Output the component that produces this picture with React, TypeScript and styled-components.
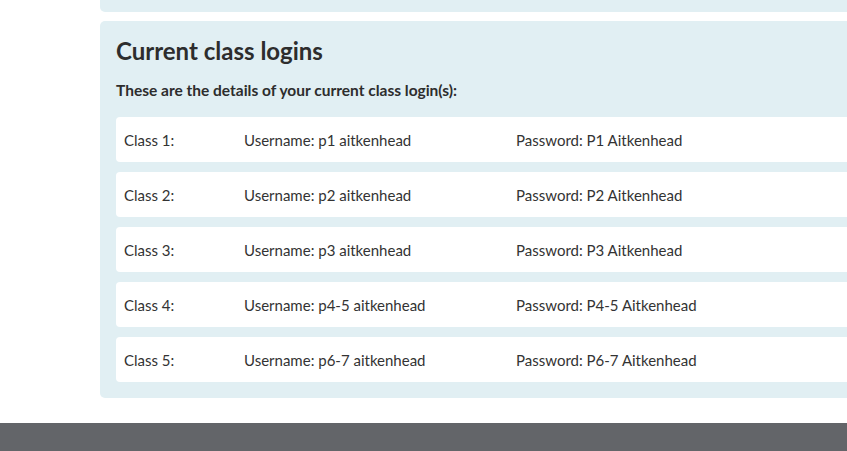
import React from "react";
import styled, { createGlobalStyle } from "styled-components";

const Global = createGlobalStyle`
  html, body { margin: 0; padding: 0; background: #ffffff; overflow: hidden; }
  body { font-family: Lato, "Liberation Sans", sans-serif; color: #333333; width: 847px; height: 451px; }
`;

const Page = styled.div`
  display: flex;
  flex-direction: column;
  height: 451px;
`;

const Main = styled.main`
  flex: 1;
  display: flex;
  flex-direction: column;
  gap: 9px;
  padding-left: 100px;
`;

const TopCard = styled.div`
  height: 12px;
  background: #e1eff3;
  border-radius: 0 0 0 5px;
`;

const Card = styled.section`
  background: #e1eff3;
  border-radius: 5px 0 0 5px;
  padding: 16px 0 16px 16px;
`;

const Title = styled.h2`
  margin: 0;
  font-size: 24px;
  line-height: 28px;
  font-weight: 700;
  color: #2d2d2d;
`;

const Intro = styled.p`
  margin: 15px 0 17px;
  font-size: 15.5px;
  line-height: 20px;
  font-weight: 700;
  color: #2d2d2d;
`;

const List = styled.div`
  display: flex;
  flex-direction: column;
  gap: 10px;
`;

const Row = styled.div`
  display: grid;
  grid-template-columns: 120px 272px 1fr;
  align-items: center;
  height: 45px;
  padding-left: 8px;
  background: #ffffff;
  border-radius: 4px 0 0 4px;
  font-size: 15px;
  color: #333333;
`;

const Cell = styled.span`
  white-space: nowrap;
`;

const Footer = styled.footer`
  height: 28px;
  background: #636569;
`;

const logins = [
  { c: "Class 1:", u: "p1 aitkenhead", p: "P1 Aitkenhead" },
  { c: "Class 2:", u: "p2 aitkenhead", p: "P2 Aitkenhead" },
  { c: "Class 3:", u: "p3 aitkenhead", p: "P3 Aitkenhead" },
  { c: "Class 4:", u: "p4-5 aitkenhead", p: "P4-5 Aitkenhead" },
  { c: "Class 5:", u: "p6-7 aitkenhead", p: "P6-7 Aitkenhead" },
];

export default function App() {
  return (
    <Page>
      <Global />
      <Main>
        <TopCard />
        <Card>
          <Title>Current class logins</Title>
          <Intro>These are the details of your current class login(s):</Intro>
          <List>
            {logins.map((l) => (
              <Row key={l.c}>
                <Cell>{l.c}</Cell>
                <Cell>Username: {l.u}</Cell>
                <Cell>Password: {l.p}</Cell>
              </Row>
            ))}
          </List>
        </Card>
      </Main>
      <Footer />
    </Page>
  );
}
